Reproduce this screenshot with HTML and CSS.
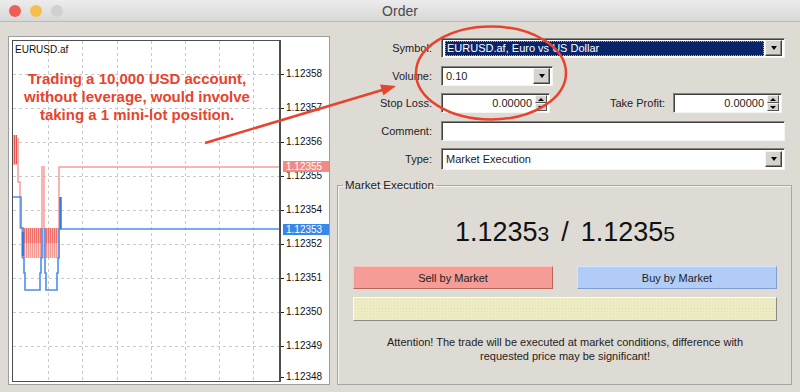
FILE: index.html
```html
<!DOCTYPE html>
<html lang="en">
<head>
    <meta charset="UTF-8">
    <title>Order</title>
    <link rel="stylesheet" href="styles.css">
</head>
<body>
    <div class="window">
        <div class="titlebar">
            <div class="lights">
                <span class="light red"></span>
                <span class="light yellow"></span>
                <span class="light gray"></span>
            </div>
            <div class="title">Order</div>
            <div></div>
        </div>

        <div class="content">
            <!-- chart on the left -->
            <div class="chart-frame">
                <div class="plot">
                    <svg class="plot-svg" width="266" height="340" viewBox="13 41 266 340">
                        <defs>
                            <pattern id="hatch-dark" width="2" height="4" patternUnits="userSpaceOnUse">
                                <rect width="2" height="4" fill="#f6b4b0"/>
                                <rect width="1" height="4" fill="#ee6f69"/>
                            </pattern>
                            <pattern id="hatch-light" width="2" height="4" patternUnits="userSpaceOnUse">
                                <rect width="2" height="4" fill="#f9cdca"/>
                                <rect width="1" height="4" fill="#f39a95"/>
                            </pattern>
                        </defs>
                        <g class="grid">
                            <line x1="13" y1="74" x2="279" y2="74"/>
                            <line x1="13" y1="108" x2="279" y2="108"/>
                            <line x1="13" y1="142" x2="279" y2="142"/>
                            <line x1="13" y1="176" x2="279" y2="176"/>
                            <line x1="13" y1="210" x2="279" y2="210"/>
                            <line x1="13" y1="244" x2="279" y2="244"/>
                            <line x1="13" y1="278" x2="279" y2="278"/>
                            <line x1="13" y1="312" x2="279" y2="312"/>
                            <line x1="13" y1="346" x2="279" y2="346"/>
                            <line x1="48" y1="41" x2="48" y2="381"/>
                            <line x1="82" y1="41" x2="82" y2="381"/>
                            <line x1="117" y1="41" x2="117" y2="381"/>
                            <line x1="151" y1="41" x2="151" y2="381"/>
                            <line x1="185" y1="41" x2="185" y2="381"/>
                            <line x1="219" y1="41" x2="219" y2="381"/>
                            <line x1="253" y1="41" x2="253" y2="381"/>
                        </g>
                        <rect x="23" y="228" width="18" height="15" fill="url(#hatch-dark)"/>
                        <rect x="23" y="243" width="18" height="15" fill="url(#hatch-light)"/>
                        <rect x="45" y="228" width="14" height="15" fill="url(#hatch-dark)"/>
                        <rect x="45" y="243" width="14" height="15" fill="url(#hatch-light)"/>
                        <g class="ask">
                            <path d="M14 135 V165 M16 135 V165 M18 138 V182 L20 182 V228 L22 228 V258 M42 258 V166 M44 166 V258 M59 258 V167 H279"/>
                        </g>
                        <g class="ask-bars">
                            <path d="M14.5 135 V164 M16.5 135 V164"/>
                        </g>
                        <g class="bid">
                            <path d="M13 197 H21 V228 H23 V258 H24 V273 H25 V290 H40 V273 H41 V258 H42 V228 M45 228 V273 H46 V290 H57 V273 H58 V258 H59 V229 H279"/>
                            <path class="thick" d="M60.5 197 V229 M23 232 V256"/>
                        </g>
                    </svg>
                    <div class="symbol-name">EURUSD.af</div>
                </div>
                <div class="axis">
                    <div class="tick">1.12358</div>
                    <div class="tick">1.12357</div>
                    <div class="tick">1.12356</div>
                    <div class="tick">1.12355</div>
                    <div class="tick">1.12354</div>
                    <div class="tick">1.12352</div>
                    <div class="tick">1.12351</div>
                    <div class="tick">1.12350</div>
                    <div class="tick">1.12349</div>
                    <div class="tick last">1.12348</div>
                    <div class="price-tag ask-tag">1.12355</div>
                    <div class="price-tag bid-tag">1.12353</div>
                </div>
            </div>

            <!-- order form -->
            <div class="form">
                <div class="rows">
                    <div class="label">Symbol:</div>
                    <div class="field">
                        <span class="selected">EURUSD.af, Euro vs US Dollar</span>
                        <span class="drop"><i></i></span>
                    </div>

                    <div class="label">Volume:</div>
                    <div class="field short">
                        <span class="value">0.10</span>
                        <span class="drop"><i></i></span>
                    </div>

                    <div class="label">Stop Loss:</div>
                    <div class="pair">
                        <div class="field num">
                            <span class="value">0.00000</span>
                            <span class="spin"><b class="up"></b><b class="down"></b></span>
                        </div>
                        <div class="label pair-label">Take Profit:</div>
                        <div class="field num">
                            <span class="value">0.00000</span>
                            <span class="spin"><b class="up"></b><b class="down"></b></span>
                        </div>
                    </div>

                    <div class="label">Comment:</div>
                    <div class="field"></div>

                    <div class="label">Type:</div>
                    <div class="field tall">
                        <span class="value">Market Execution</span>
                        <span class="drop"><i></i></span>
                    </div>
                </div>

                <fieldset class="group">
                    <legend>Market Execution</legend>
                    <div class="quote">1.1235<small>3</small><span class="slash">/</span>1.1235<small>5</small></div>
                    <div class="actions">
                        <div class="btn sell">Sell by Market</div>
                        <div class="btn buy">Buy by Market</div>
                    </div>
                    <div class="slider"></div>
                    <p class="attention">Attention! The trade will be executed at market conditions, difference with<br>requested price may be significant!</p>
                </fieldset>
            </div>
        </div>

        <!-- annotation drawn on top of the screenshot -->
        <div class="note">Trading a 10,000 USD account,<br>without leverage, would involve<br>taking a 1 mini-lot position.</div>
        <svg class="marks" width="800" height="392">
            <ellipse cx="491" cy="73" rx="75" ry="46.5"/>
            <line x1="205" y1="143" x2="384" y2="89.5"/>
            <polygon points="396,86 383.4,95.3 380,84.6"/>
        </svg>
    </div>
</body>
</html>
```

FILE: styles.css
```css
* {
    box-sizing: border-box;
}

body {
    margin: 0;
    font-family: "Liberation Sans", Arial, sans-serif;
    font-size: 11px;
    color: #1c1c1c;
}

.window {
    position: relative;
    width: 800px;
    height: 392px;
    background-color: #dedbd5;
    overflow: hidden;
}

/* title bar */
.titlebar {
    height: 22px;
    display: grid;
    grid-template-columns: 1fr auto 1fr;
    align-items: center;
    background: linear-gradient(#ececec, #d7d7d7);
    border-bottom: 1px solid #bababa;
}

.lights {
    display: flex;
    gap: 9px;
    padding-left: 9px;
}

.light {
    width: 12px;
    height: 12px;
    border-radius: 50%;
}

.light.red { background-color: #ef5f57; }
.light.yellow { background-color: #f6be4f; }
.light.gray { background-color: #d0d0d0; }

.title {
    font-size: 14px;
    color: #4a4a4a;
}

.content {
    display: flex;
    padding: 14px 0 0 8px;
}

/* chart */
.chart-frame {
    display: flex;
    width: 322px;
    height: 349px;
    padding: 3px 0 0 3px;
    background-color: #fff;
    border: 1px solid #9d9d9d;
}

.plot {
    position: relative;
    width: 269px;
    height: 342px;
    border: 1px solid #4d4d4d;
    border-right-width: 2px;
}

.plot-svg {
    display: block;
}

.grid line {
    stroke: #c9c9c9;
    stroke-width: 1;
    stroke-dasharray: 3 3;
    shape-rendering: crispEdges;
}

.ask path {
    fill: none;
    stroke: #f39d98;
    stroke-width: 1.5;
}

.ask-bars path {
    fill: none;
    stroke: #e8554e;
    stroke-width: 1;
}

.bid path {
    fill: none;
    stroke: #4b8ff0;
    stroke-width: 1.6;
}

.bid path.thick {
    stroke: #2f7be8;
    stroke-width: 2.5;
}

.symbol-name {
    position: absolute;
    left: 2px;
    top: 3px;
    font-size: 10px;
    color: #111;
}

.axis {
    position: relative;
    flex: 1;
    padding-top: 17px;
    overflow: hidden;
}

.tick {
    position: relative;
    height: 34px;
    line-height: 34px;
    padding-left: 5px;
    font-size: 10px;
    color: #111;
}

.tick::before {
    content: "";
    position: absolute;
    left: 0;
    top: 17px;
    width: 3px;
    height: 1px;
    background-color: #222;
}

.tick.last {
    height: 28px;
    line-height: 28px;
}

.tick.last::before {
    top: 14px;
}

.price-tag {
    position: absolute;
    left: 2px;
    width: 50px;
    height: 11px;
    line-height: 11px;
    padding-left: 3px;
    font-size: 10px;
    color: #fff;
}

.ask-tag {
    top: 121px;
    background-color: #f08a84;
}

.bid-tag {
    top: 184px;
    background-color: #3a87ea;
}

/* form */
.form {
    width: 455px;
    margin-left: 7px;
    padding-top: 2px;
}

.rows {
    display: grid;
    grid-template-columns: 95px 344px;
    column-gap: 9px;
    row-gap: 7.5px;
    align-items: center;
}

.label {
    text-align: right;
    color: #222;
}

.field {
    display: flex;
    align-items: center;
    height: 20px;
    padding: 2px;
    background-color: #fff;
    border: 1px solid;
    border-color: #848484 #f4f4f4 #f4f4f4 #848484;
    box-shadow: inset 1px 1px 0 #404040;
}

.field.short {
    width: 112px;
}

.field.tall {
    height: 22px;
}

.field.num {
    width: 109px;
}

.value {
    flex: 1;
    padding-left: 2px;
    white-space: nowrap;
}

.num .value {
    text-align: right;
    padding-right: 3px;
}

.selected {
    flex: 1;
    height: 15px;
    line-height: 15px;
    padding-left: 2px;
    margin-left: 1px;
    color: #fff;
    background-color: #0a246a;
    outline: 1px dotted #b7b38a;
    outline-offset: -1px;
}

.drop {
    display: flex;
    align-items: center;
    justify-content: center;
    width: 17px;
    height: 16px;
    margin-left: 1px;
    background-color: #d6d3cc;
    border: 1px solid;
    border-color: #f2f2f2 #404040 #404040 #f2f2f2;
    box-shadow: inset -1px -1px 0 #888;
}

.drop i {
    width: 0;
    height: 0;
    border-left: 3.5px solid transparent;
    border-right: 3.5px solid transparent;
    border-top: 4px solid #000;
}

.spin {
    display: flex;
    flex-direction: column;
    width: 12px;
    height: 16px;
}

.spin b {
    flex: 1;
    display: flex;
    align-items: center;
    justify-content: center;
    background-color: #d6d3cc;
    border: 1px solid;
    border-color: #f2f2f2 #555 #555 #f2f2f2;
}

.spin b::after {
    content: "";
    border-left: 3px solid transparent;
    border-right: 3px solid transparent;
}

.spin .up::after {
    border-bottom: 3px solid #000;
}

.spin .down::after {
    border-top: 3px solid #000;
}

.pair {
    display: flex;
    align-items: center;
}

.pair-label {
    width: 123px;
    padding-right: 8px;
}

/* market execution box */
.group {
    width: 455px;
    height: 207px;
    margin: 8px 0 0;
    padding: 25px 14px 0 15px;
    border: 1px solid #a6a6a6;
    box-shadow: inset 1px 1px 0 #f4f2ee;
}

.group legend {
    margin-left: -10px;
    padding: 0 2px;
    font-size: 11.5px;
    line-height: 14px;
    color: #222;
}

.quote {
    height: 30px;
    line-height: 30px;
    text-align: center;
    font-size: 27px;
    color: #111;
}

.quote small {
    font-size: 21px;
}

.slash {
    padding: 0 12px;
}

.actions {
    display: grid;
    grid-template-columns: 200px 200px;
    column-gap: 24px;
    margin-top: 19px;
}

.btn {
    display: flex;
    align-items: center;
    justify-content: center;
    height: 23px;
    border: 1px solid;
    color: #222;
}

.btn.sell {
    background-color: #f49c95;
    border-color: #f9c4c0 #c0625c #c0625c #f9c4c0;
}

.btn.buy {
    background-color: #b1cdf7;
    border-color: #d6e5fb #7f9fd0 #7f9fd0 #d6e5fb;
}

.slider {
    height: 24px;
    margin-top: 8px;
    background-color: #eeecc4;
    background-image: radial-gradient(#e0dcb0 0.7px, transparent 0.9px);
    background-size: 3px 3px;
    border: 1px solid;
    border-color: #fbfbf4 #8a8a8a #8a8a8a #fbfbf4;
}

.attention {
    margin: 14px 0 0;
    line-height: 14px;
    text-align: center;
    color: #222;
}

/* annotation overlay */
.note {
    position: absolute;
    left: 12px;
    top: 70px;
    width: 250px;
    text-align: center;
    font-size: 15px;
    font-weight: bold;
    line-height: 18px;
    color: #e8432d;
}

.marks {
    position: absolute;
    left: 0;
    top: 0;
    pointer-events: none;
}

.marks ellipse,
.marks line {
    fill: none;
    stroke: #e8432d;
    stroke-width: 2.5;
}

.marks polygon {
    fill: #e8432d;
}
```
